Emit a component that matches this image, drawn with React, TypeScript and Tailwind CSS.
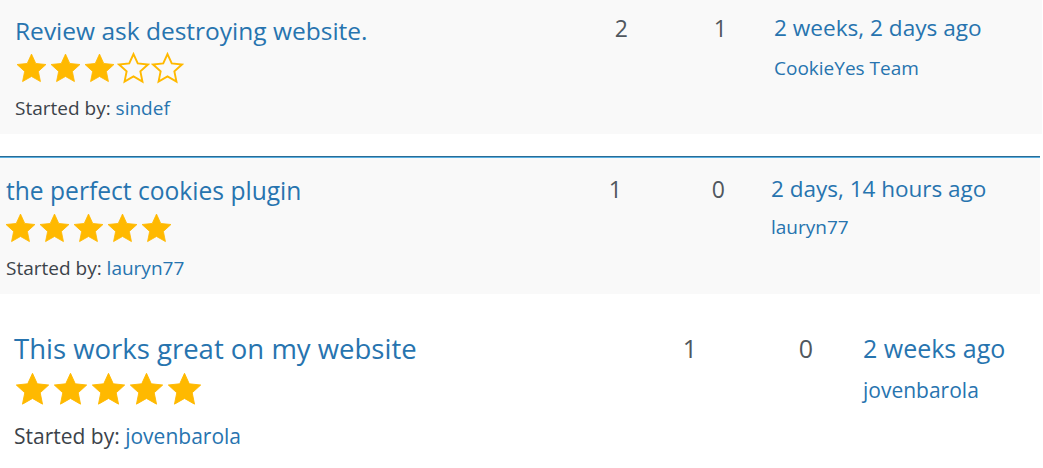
import React from 'react';

const STAR = '12,1.5 15.1,8.3 22.5,9.1 17,14.1 18.5,21.5 12,17.8 5.5,21.5 7,14.1 1.5,9.1 8.9,8.3';

const Star = ({ filled, className }: { filled: boolean; className: string }) => (
  <svg viewBox="0 0 24 24" className={className}>
    {filled ? (
      <polygon points={STAR} fill="#ffb900" stroke="#ffb900" strokeWidth="0.6" strokeLinejoin="round" />
    ) : (
      <polygon points={STAR} fill="none" stroke="#ffb900" strokeWidth="1.4" strokeLinejoin="miter" />
    )}
  </svg>
);

const Stars = ({ rating, size, className }: { rating: number; size: string; className: string }) => (
  <div className={`flex gap-[1px] ${className}`}>
    {[1, 2, 3, 4, 5].map((i) => (
      <Star key={i} filled={i <= rating} className={size} />
    ))}
  </div>
);

export default function App() {
  return (
    <div className="w-[1043px] h-[468px] bg-white overflow-hidden text-[#50575e]" style={{ fontFamily: '"Open Sans", "Liberation Sans", sans-serif' }}>
      {/* row 1 */}
      <div className="flex w-[1042px] h-[134px] bg-[#f9f9f9]">
        <div className="w-[528px] pl-[15px] pt-[15px]">
          <a className="block text-[24.5px] leading-[32px] text-[#2774af]">Review ask destroying website.</a>
          <Stars rating={3} size="w-[33px] h-[33px]" className="mt-[5px]" />
          <p className="mt-[11px] text-[19px] leading-[25px] text-[#3c434a]">
            Started by: <a className="text-[#2774af]">sindef</a>
          </p>
        </div>
        <div className="w-[100px] pt-[12px] text-right text-[23px] leading-[32px]">2</div>
        <div className="w-[99px] pt-[12px] text-right text-[23px] leading-[32px]">1</div>
        <div className="pl-[47px] pt-[12px]">
          <a className="block text-[22.6px] leading-[32px] text-[#2774af]">2 weeks, 2 days ago</a>
          <a className="block mt-[11px] text-[19px] leading-[26px] text-[#2774af]">CookieYes Team</a>
        </div>
      </div>

      <div className="h-[22px]" />

      {/* row 2 */}
      <div className="w-[1040px] border-t border-[#2a6b94]">
        <div className="flex h-[137px] bg-[#f9f9f9] border-t border-[#58aee0]">
          <div className="w-[522px] pl-[6px] pt-[17px]">
            <a className="block text-[24.6px] leading-[32px] text-[#2774af]">the perfect cookies plugin</a>
            <Stars rating={5} size="w-[33px] h-[33px]" className="mt-[5px] -ml-[2px]" />
            <p className="mt-[11px] text-[19px] leading-[25px] text-[#3c434a]">
              Started by: <a className="text-[#2774af]">lauryn77</a>
            </p>
          </div>
          <div className="w-[100px] pt-[15px] text-right text-[23px] leading-[32px]">1</div>
          <div className="w-[103px] pt-[15px] text-right text-[23px] leading-[32px]">0</div>
          <div className="pl-[46px] pt-[15px]">
            <a className="block text-[22.5px] leading-[32px] text-[#2774af]">2 days, 14 hours ago</a>
            <a className="block mt-[9px] text-[19px] leading-[26px] text-[#2774af]">lauryn77</a>
          </div>
        </div>
      </div>

      {/* row 3 */}
      <div className="flex">
        <div className="w-[597px] pl-[14px] pt-[37px]">
          <a className="block text-[27.5px] leading-[36px] text-[#2774af]">This works great on my website</a>
          <Stars rating={5} size="w-[37px] h-[37px]" className="mt-[4px]" />
          <p className="mt-[14px] text-[21px] leading-[28px] text-[#3c434a]">
            Started by: <a className="text-[#2774af]">jovenbarola</a>
          </p>
        </div>
        <div className="w-[100px] pt-[37px] text-right text-[25px] leading-[34px]">1</div>
        <div className="w-[116px] pt-[37px] text-right text-[25px] leading-[34px]">0</div>
        <div className="pl-[50px] pt-[37px]">
          <a className="block text-[25px] leading-[34px] text-[#2774af]">2 weeks ago</a>
          <a className="block mt-[11px] text-[21px] leading-[28px] text-[#2774af]">jovenbarola</a>
        </div>
      </div>
    </div>
  );
}
